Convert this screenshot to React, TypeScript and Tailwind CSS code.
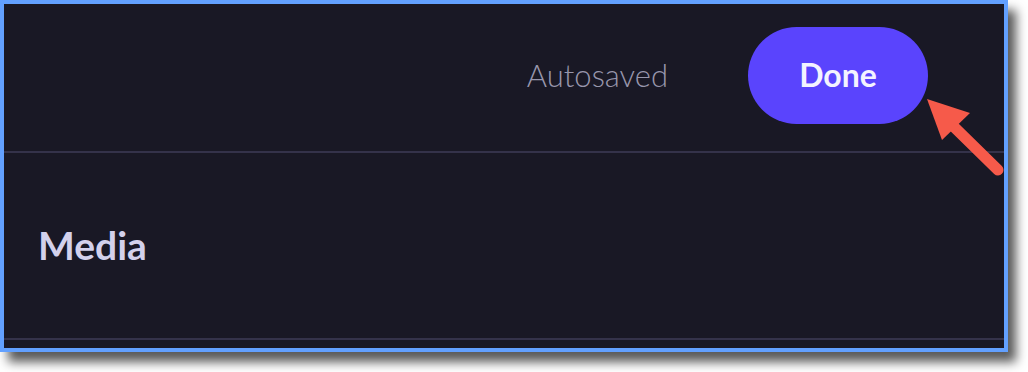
export default function App() {
  return (
    <div className="relative h-[372px] w-[1028px] overflow-hidden bg-white font-['Lato',sans-serif]">
      {/* Framed panel */}
      <div className="flex h-[352px] w-[1008px] flex-col border-4 border-[#62a0ff] bg-[#191825] shadow-[8px_10px_10px_rgba(0,0,0,0.65)]">
        {/* Header */}
        <header className="flex h-[149px] items-center justify-end gap-[80px] border-b-2 border-[#34324a] pb-[5px] pr-[76px]">
          <span className="text-[31px] font-light text-[#9896ac]">Autosaved</span>
          <button className="flex h-[97px] w-[180px] items-center justify-center rounded-full bg-[#5a44fd] text-[32px] font-bold text-[#f4f3ff]">
            Done
          </button>
        </header>

        {/* Section */}
        <div className="flex h-[187px] items-center border-b-2 border-[#34324a] pl-[34px]">
          <h2 className="text-[39px] font-bold text-[#d3d1ec]">Media</h2>
        </div>
      </div>

      {/* Annotation arrow */}
      <svg className="absolute left-0 top-0" width="1028" height="372" viewBox="0 0 1028 372">
        <line x1="948" y1="121" x2="998" y2="170" stroke="#f65a4a" strokeWidth="11" strokeLinecap="round" />
        <polygon points="927,99 970,113 942,140" fill="#f65a4a" />
      </svg>
    </div>
  )
}
